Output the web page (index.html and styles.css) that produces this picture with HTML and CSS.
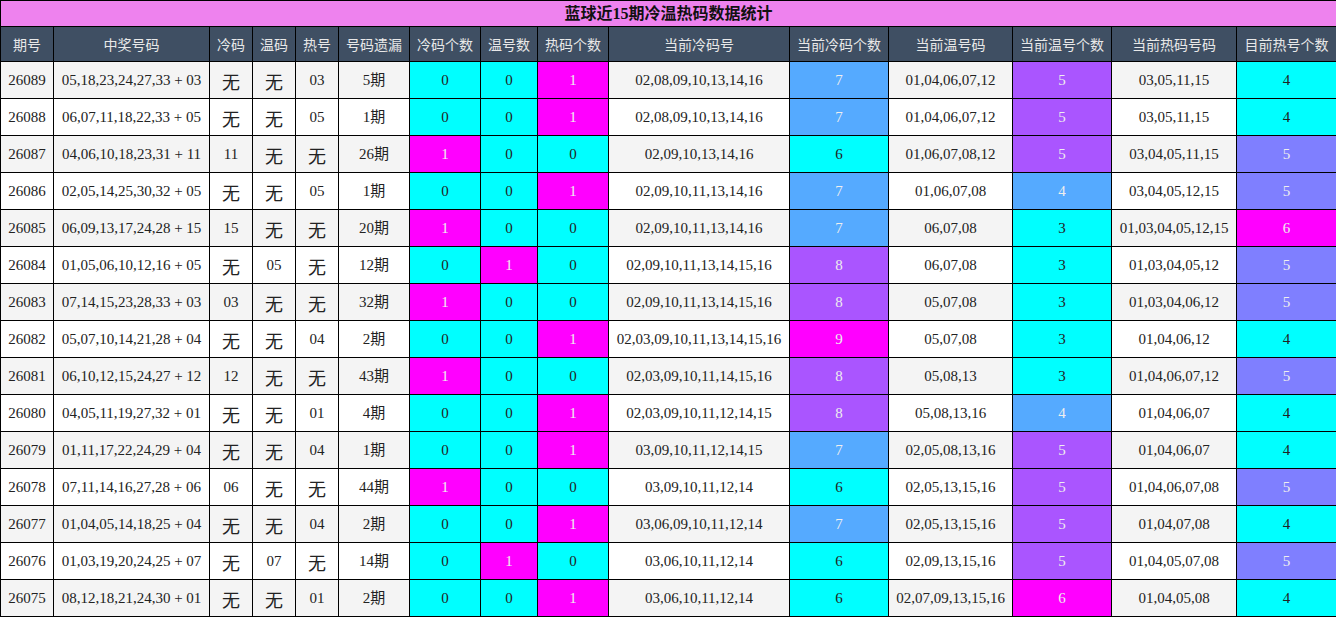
FILE: index.html
```html
<!DOCTYPE html>
<html lang="zh">
<head>
<meta charset="utf-8">
<title>蓝球近15期冷温热码数据统计</title>
<link rel="stylesheet" href="styles.css">
</head>
<body>
<table class="stats">
<colgroup>
<col style="width:53px"><col style="width:156px"><col style="width:43px"><col style="width:43px"><col style="width:43px"><col style="width:71px"><col style="width:71px"><col style="width:57px"><col style="width:71px"><col style="width:181px"><col style="width:99px"><col style="width:124px"><col style="width:99px"><col style="width:125px"><col style="width:100px">
</colgroup>
<thead>
<tr class="title"><th colspan="15">蓝球近15期冷温热码数据统计</th></tr>
<tr class="head"><th>期号</th><th>中奖号码</th><th>冷码</th><th>温码</th><th>热号</th><th>号码遗漏</th><th>冷码个数</th><th>温号数</th><th>热码个数</th><th>当前冷码号</th><th>当前冷码个数</th><th>当前温号码</th><th>当前温号个数</th><th>当前热码号码</th><th>目前热号个数</th></tr>
</thead>
<tbody>
<tr><td>26089</td><td>05,18,23,24,27,33 + 03</td><td class="wu">无</td><td class="wu">无</td><td>03</td><td>5期</td><td class="c">0</td><td class="c">0</td><td class="m">1</td><td>02,08,09,10,13,14,16</td><td class="b">7</td><td>01,04,06,07,12</td><td class="p">5</td><td>03,05,11,15</td><td class="c">4</td></tr>
<tr><td>26088</td><td>06,07,11,18,22,33 + 05</td><td class="wu">无</td><td class="wu">无</td><td>05</td><td>1期</td><td class="c">0</td><td class="c">0</td><td class="m">1</td><td>02,08,09,10,13,14,16</td><td class="b">7</td><td>01,04,06,07,12</td><td class="p">5</td><td>03,05,11,15</td><td class="c">4</td></tr>
<tr><td>26087</td><td>04,06,10,18,23,31 + 11</td><td>11</td><td class="wu">无</td><td class="wu">无</td><td>26期</td><td class="m">1</td><td class="c">0</td><td class="c">0</td><td>02,09,10,13,14,16</td><td class="c">6</td><td>01,06,07,08,12</td><td class="p">5</td><td>03,04,05,11,15</td><td class="s">5</td></tr>
<tr><td>26086</td><td>02,05,14,25,30,32 + 05</td><td class="wu">无</td><td class="wu">无</td><td>05</td><td>1期</td><td class="c">0</td><td class="c">0</td><td class="m">1</td><td>02,09,10,11,13,14,16</td><td class="b">7</td><td>01,06,07,08</td><td class="b">4</td><td>03,04,05,12,15</td><td class="s">5</td></tr>
<tr><td>26085</td><td>06,09,13,17,24,28 + 15</td><td>15</td><td class="wu">无</td><td class="wu">无</td><td>20期</td><td class="m">1</td><td class="c">0</td><td class="c">0</td><td>02,09,10,11,13,14,16</td><td class="b">7</td><td>06,07,08</td><td class="c">3</td><td>01,03,04,05,12,15</td><td class="m">6</td></tr>
<tr><td>26084</td><td>01,05,06,10,12,16 + 05</td><td class="wu">无</td><td>05</td><td class="wu">无</td><td>12期</td><td class="c">0</td><td class="m">1</td><td class="c">0</td><td>02,09,10,11,13,14,15,16</td><td class="p">8</td><td>06,07,08</td><td class="c">3</td><td>01,03,04,05,12</td><td class="s">5</td></tr>
<tr><td>26083</td><td>07,14,15,23,28,33 + 03</td><td>03</td><td class="wu">无</td><td class="wu">无</td><td>32期</td><td class="m">1</td><td class="c">0</td><td class="c">0</td><td>02,09,10,11,13,14,15,16</td><td class="p">8</td><td>05,07,08</td><td class="c">3</td><td>01,03,04,06,12</td><td class="s">5</td></tr>
<tr><td>26082</td><td>05,07,10,14,21,28 + 04</td><td class="wu">无</td><td class="wu">无</td><td>04</td><td>2期</td><td class="c">0</td><td class="c">0</td><td class="m">1</td><td>02,03,09,10,11,13,14,15,16</td><td class="m">9</td><td>05,07,08</td><td class="c">3</td><td>01,04,06,12</td><td class="c">4</td></tr>
<tr><td>26081</td><td>06,10,12,15,24,27 + 12</td><td>12</td><td class="wu">无</td><td class="wu">无</td><td>43期</td><td class="m">1</td><td class="c">0</td><td class="c">0</td><td>02,03,09,10,11,14,15,16</td><td class="p">8</td><td>05,08,13</td><td class="c">3</td><td>01,04,06,07,12</td><td class="s">5</td></tr>
<tr><td>26080</td><td>04,05,11,19,27,32 + 01</td><td class="wu">无</td><td class="wu">无</td><td>01</td><td>4期</td><td class="c">0</td><td class="c">0</td><td class="m">1</td><td>02,03,09,10,11,12,14,15</td><td class="p">8</td><td>05,08,13,16</td><td class="b">4</td><td>01,04,06,07</td><td class="c">4</td></tr>
<tr><td>26079</td><td>01,11,17,22,24,29 + 04</td><td class="wu">无</td><td class="wu">无</td><td>04</td><td>1期</td><td class="c">0</td><td class="c">0</td><td class="m">1</td><td>03,09,10,11,12,14,15</td><td class="b">7</td><td>02,05,08,13,16</td><td class="p">5</td><td>01,04,06,07</td><td class="c">4</td></tr>
<tr><td>26078</td><td>07,11,14,16,27,28 + 06</td><td>06</td><td class="wu">无</td><td class="wu">无</td><td>44期</td><td class="m">1</td><td class="c">0</td><td class="c">0</td><td>03,09,10,11,12,14</td><td class="c">6</td><td>02,05,13,15,16</td><td class="p">5</td><td>01,04,06,07,08</td><td class="s">5</td></tr>
<tr><td>26077</td><td>01,04,05,14,18,25 + 04</td><td class="wu">无</td><td class="wu">无</td><td>04</td><td>2期</td><td class="c">0</td><td class="c">0</td><td class="m">1</td><td>03,06,09,10,11,12,14</td><td class="b">7</td><td>02,05,13,15,16</td><td class="p">5</td><td>01,04,07,08</td><td class="c">4</td></tr>
<tr><td>26076</td><td>01,03,19,20,24,25 + 07</td><td class="wu">无</td><td>07</td><td class="wu">无</td><td>14期</td><td class="c">0</td><td class="m">1</td><td class="c">0</td><td>03,06,10,11,12,14</td><td class="c">6</td><td>02,09,13,15,16</td><td class="p">5</td><td>01,04,05,07,08</td><td class="s">5</td></tr>
<tr><td>26075</td><td>08,12,18,21,24,30 + 01</td><td class="wu">无</td><td class="wu">无</td><td>01</td><td>2期</td><td class="c">0</td><td class="c">0</td><td class="m">1</td><td>03,06,10,11,12,14</td><td class="c">6</td><td>02,07,09,13,15,16</td><td class="m">6</td><td>01,04,05,08</td><td class="c">4</td></tr>
</tbody>
</table>
</body>
</html>
```
FILE: styles.css
```css
html, body {
  margin: 0;
  padding: 0;
  background: #ffffff;
}
.stats {
  width: 1336px;
  table-layout: fixed;
  border-collapse: collapse;
  font-family: "Liberation Serif", "Noto Sans CJK SC", serif;
  font-size: 15px;
  line-height: 18px;
  color: #222;
}
.stats th, .stats td {
  border: 1px solid #000;
  padding: 0;
  text-align: center;
  white-space: nowrap;
  overflow: hidden;
}
.title th {
  height: 25px;
  line-height: 22px;
  background: #ee82ee;
  font-size: 16px;
  font-weight: bold;
  color: #111;
}
.head th {
  height: 34px;
  line-height: 20px;
  background: #3f4f63;
  color: #e8e8e8;
  font-family: "Noto Sans CJK SC", sans-serif;
  font-size: 14px;
  font-weight: normal;
}
.stats tbody td {
  height: 36px;
}
.stats tbody tr:nth-child(odd) {
  background: #f4f4f4;
}
.stats tbody tr:nth-child(even) {
  background: #ffffff;
}
.stats tbody td.wu {
  font-family: "Noto Sans CJK SC", sans-serif;
  font-size: 18px;
  line-height: 18px;
  height: 34px;
  padding-top: 2px;
}
.stats td.c { background: #00ffff; color: #222; }
.stats td.m { background: #ff00ff; color: #eeeeee; }
.stats td.b { background: #55aaff; color: #eeeeee; }
.stats td.p { background: #aa55ff; color: #eeeeee; }
.stats td.s { background: #7f7fff; color: #eeeeee; }
```
